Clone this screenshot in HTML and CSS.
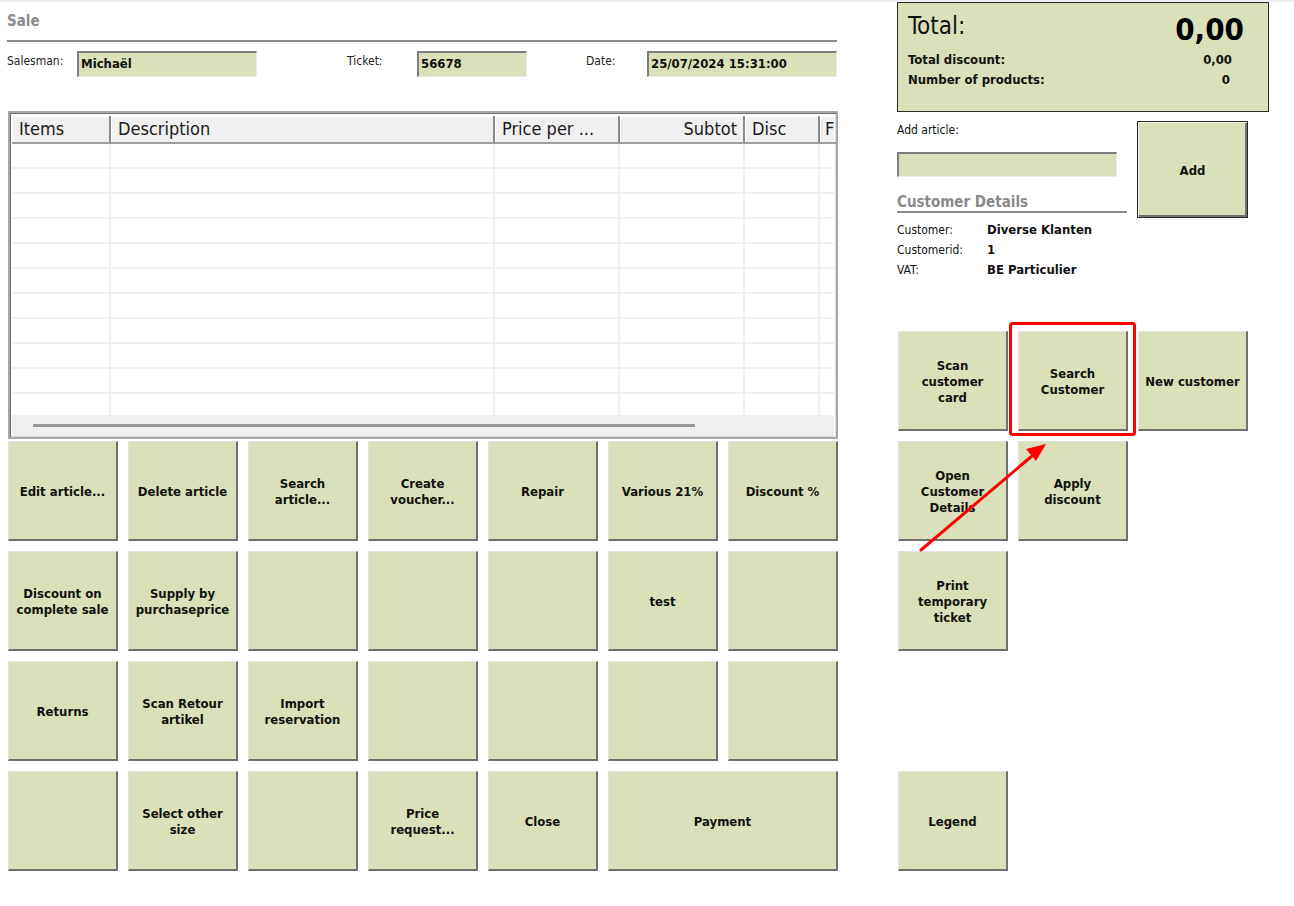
FILE: index.html
```html
<!DOCTYPE html>
<html>
<head>
<meta charset="utf-8">
<link rel="stylesheet" href="styles.css">
</head>
<body>
<div class="app">
  <div class="left">
    <div class="title">Sale</div>
    <div class="fields">
      <span class="lbl lbl-sales">Salesman:</span>
      <div class="input in-sales">Michaël</div>
      <span class="lbl lbl-ticket">Ticket:</span>
      <div class="input in-ticket">56678</div>
      <span class="lbl lbl-date">Date:</span>
      <div class="input in-date">25/07/2024 15:31:00</div>
    </div>
    <div class="table">
      <div class="thead">
        <div class="th c1">Items</div>
        <div class="th c2">Description</div>
        <div class="th c3">Price per ...</div>
        <div class="th c4 ar">Subtot</div>
        <div class="th c5">Disc</div>
        <div class="th c6">F</div>
      </div>
      <div class="tbody">
        <div class="tr"><div class="td c1"></div><div class="td c2"></div><div class="td c3"></div><div class="td c4"></div><div class="td c5"></div><div class="td c6"></div></div>
        <div class="tr"><div class="td c1"></div><div class="td c2"></div><div class="td c3"></div><div class="td c4"></div><div class="td c5"></div><div class="td c6"></div></div>
        <div class="tr"><div class="td c1"></div><div class="td c2"></div><div class="td c3"></div><div class="td c4"></div><div class="td c5"></div><div class="td c6"></div></div>
        <div class="tr"><div class="td c1"></div><div class="td c2"></div><div class="td c3"></div><div class="td c4"></div><div class="td c5"></div><div class="td c6"></div></div>
        <div class="tr"><div class="td c1"></div><div class="td c2"></div><div class="td c3"></div><div class="td c4"></div><div class="td c5"></div><div class="td c6"></div></div>
        <div class="tr"><div class="td c1"></div><div class="td c2"></div><div class="td c3"></div><div class="td c4"></div><div class="td c5"></div><div class="td c6"></div></div>
        <div class="tr"><div class="td c1"></div><div class="td c2"></div><div class="td c3"></div><div class="td c4"></div><div class="td c5"></div><div class="td c6"></div></div>
        <div class="tr"><div class="td c1"></div><div class="td c2"></div><div class="td c3"></div><div class="td c4"></div><div class="td c5"></div><div class="td c6"></div></div>
        <div class="tr"><div class="td c1"></div><div class="td c2"></div><div class="td c3"></div><div class="td c4"></div><div class="td c5"></div><div class="td c6"></div></div>
        <div class="tr"><div class="td c1"></div><div class="td c2"></div><div class="td c3"></div><div class="td c4"></div><div class="td c5"></div><div class="td c6"></div></div>
        <div class="tr"><div class="td c1"></div><div class="td c2"></div><div class="td c3"></div><div class="td c4"></div><div class="td c5"></div><div class="td c6"></div></div>
      </div>
      <div class="hscroll"><div class="thumb"></div></div>
    </div>
    <div class="btns">
      <div class="btn">Edit article...</div>
      <div class="btn">Delete article</div>
      <div class="btn">Search<br>article...</div>
      <div class="btn">Create<br>voucher...</div>
      <div class="btn">Repair</div>
      <div class="btn">Various 21%</div>
      <div class="btn">Discount %</div>

      <div class="btn">Discount on<br>complete sale</div>
      <div class="btn">Supply by<br>purchaseprice</div>
      <div class="btn"></div>
      <div class="btn"></div>
      <div class="btn"></div>
      <div class="btn">test</div>
      <div class="btn"></div>

      <div class="btn">Returns</div>
      <div class="btn">Scan Retour<br>artikel</div>
      <div class="btn">Import<br>reservation</div>
      <div class="btn"></div>
      <div class="btn"></div>
      <div class="btn"></div>
      <div class="btn"></div>

      <div class="btn"></div>
      <div class="btn">Select other<br>size</div>
      <div class="btn"></div>
      <div class="btn">Price<br>request...</div>
      <div class="btn">Close</div>
      <div class="btn span2">Payment</div>
    </div>
  </div>

  <div class="side">
    <div class="total">
      <div class="total-row">
        <span class="total-lbl">Total:</span>
        <span class="total-val">0,00</span>
      </div>
      <div class="sub-row"><span>Total discount:</span><span>0,00</span></div>
      <div class="sub-row"><span>Number of products:</span><span class="nprod">0</span></div>
    </div>
    <div class="add-area">
      <div class="add-left">
        <div class="small-lbl">Add article:</div>
        <div class="input in-add"></div>
        <div class="cd-title">Customer Details</div>
        <div class="cd-rows">
          <span class="cd-k">Customer:</span><span class="cd-v">Diverse Klanten</span>
          <span class="cd-k">Customerid:</span><span class="cd-v">1</span>
          <span class="cd-k">VAT:</span><span class="cd-v">BE Particulier</span>
        </div>
      </div>
      <div class="btn btn-add">Add</div>
    </div>
    <div class="rbtns">
      <div class="btn">Scan<br>customer<br>card</div>
      <div class="btn">Search<br>Customer</div>
      <div class="btn">New customer</div>
      <div class="btn">Open<br>Customer<br>Details</div>
      <div class="btn">Apply<br>discount</div>
      <div class="btn r3">Print<br>temporary<br>ticket</div>
      <div class="btn r5">Legend</div>
    </div>
  </div>
</div>

<svg class="annot" width="1294" height="906" viewBox="0 0 1294 906">
  <rect x="1010.5" y="323.5" width="124" height="111" rx="2" fill="none" stroke="#ff0000" stroke-width="3"/>
  <line x1="921" y1="550" x2="1032" y2="456" stroke="#ff0000" stroke-width="3" stroke-linecap="round"/>
  <polygon points="1046,444 1026,449 1036,461" fill="#ff0000"/>
</svg>
</body>
</html>
```

FILE: styles.css
```css
* { box-sizing: border-box; }
html, body { margin: 0; padding: 0; background: #ffffff; }
body {
  width: 1294px;
  height: 906px;
  overflow: hidden;
  border-top: 2px solid #eef1f7;
  font-family: "DejaVu Sans Condensed", "DejaVu Sans", sans-serif;
  color: #111;
  position: relative;
}
.app { display: flex; }

.left { width: 838px; padding-left: 7px; flex: none; }
.title {
  font-size: 15px; font-weight: bold; color: #8a8a8a;
  padding-top: 10px; height: 40px;
  border-bottom: 2px solid #8c8c8c;
  width: 830px;
}
.fields { display: flex; align-items: flex-start; margin-top: 9px; height: 26px; }
.lbl { font-size: 12px; color: #222; padding-top: 3px; }
.lbl-sales { width: 70px; }
.lbl-ticket { width: 70px; margin-left: 90px; }
.lbl-date { width: 61px; margin-left: 59px; }
.input {
  height: 26px;
  background: #dae0b9;
  border-top: 2px solid #7e7e7e;
  border-left: 2px solid #7e7e7e;
  border-right: 1px solid #ececec;
  border-bottom: 1px solid #ececec;
  font-size: 13px; font-weight: bold; color: #111;
  padding: 3px 0 0 2px;
}
.in-sales { width: 180px; }
.in-ticket { width: 110px; }
.in-date { width: 190px; }

.table {
  margin-top: 34px; margin-left: 1px;
  width: 830px; height: 328px;
  border: 2px solid #a8a8a8;
  box-shadow: inset 1px 1px 0 #6c6c6c, inset -1px -1px 0 #dcdcdc;
  padding: 3px 2px 1px 2px;
  display: flex; flex-direction: column;
  background: #fff;
  overflow: hidden;
}
.thead { display: flex; height: 28px; background: #f0f0f0; flex: none; }
.th {
  font-size: 18px; color: #1a1a1a; line-height: 26px;
  padding-left: 7px;
  border-right: 2px solid #8c8c8c;
  border-bottom: 2px solid #a0a0a0;
  box-shadow: inset 1px 1px 0 #ffffff;
  white-space: nowrap; overflow: hidden;
}
.th.ar { text-align: right; padding-right: 6px; padding-left: 0; }
.c1 { width: 99px; flex: none; }
.c2 { width: 384px; flex: none; }
.c3 { width: 125px; flex: none; }
.c4 { width: 125px; flex: none; }
.c5 { width: 75px; flex: none; }
.c6 { width: 16px; flex: none; }
.th.c6 { padding-left: 5px; border-right: none; }
.tbody { height: 271px; overflow: hidden; flex: none; }
.tr { display: flex; height: 25px; border-bottom: 2px solid #f1f1f1; }
.td { border-right: 2px solid #f1f1f1; height: 100%; }
.hscroll { flex: 1; background: #f0f0f0; display: flex; align-items: center; padding-left: 21px; }
.thumb { width: 662px; height: 3px; background: #9a9a9a; }

.btns {
  margin-top: 2px; margin-left: 1px;
  display: grid;
  grid-template-columns: repeat(7, 110px);
  grid-auto-rows: 100px;
  gap: 10px;
}
.btn {
  background: #dae0b9;
  border-top: 1px solid #e2e2e2;
  border-left: 1px solid #e2e2e2;
  border-right: 2px solid #6f6f6f;
  border-bottom: 2px solid #6f6f6f;
  display: flex; align-items: center; justify-content: center;
  text-align: center;
  padding-top: 2px;
  font-size: 13px; font-weight: bold; line-height: 16px; color: #111;
}
.span2 { grid-column: span 2; }

.side { margin-left: 59px; width: 372px; flex: none; }
.total {
  width: 372px; height: 110px;
  background: #dae0b9;
  border: 1px solid #2a2a2a;
  padding: 6px 24px 0 10px;
}
.total-row { display: flex; justify-content: space-between; align-items: flex-start; height: 41px; }
.total-lbl { font-size: 24px; line-height: 34px; color: #111; }
.total-val { font-size: 31px; font-weight: bold; color: #000; line-height: 42px; margin-top: -1px; }
.sub-row {
  display: flex; justify-content: space-between;
  font-size: 13px; font-weight: bold; line-height: 20px;
  padding-right: 12px;
}
.nprod { padding-right: 2px; }

.add-area { display: flex; margin-top: 10px; }
.add-left { width: 230px; }
.small-lbl { font-size: 12px; padding-top: 1px; height: 30px; }
.in-add { width: 220px; height: 25px; }
.cd-title {
  margin-top: 17px;
  font-size: 15px; font-weight: bold; color: #8a8a8a;
  border-bottom: 2px solid #8c8c8c;
  height: 19px; line-height: 17px;
}
.cd-rows {
  display: grid; grid-template-columns: 90px auto;
  font-size: 12px; line-height: 20px; margin-top: 7px;
}
.cd-v { font-weight: bold; font-size: 13px; }
.btn-add {
  margin-left: 10px; width: 111px; height: 97px;
  margin-top: -1px;
  border: 1px solid #2a2a2a;
  box-shadow: inset 1px 1px 0 #f0f0f0, inset -2px -2px 0 #707070;
}

.rbtns {
  margin-top: 51px; margin-left: 1px;
  display: grid;
  grid-template-columns: repeat(3, 110px);
  grid-template-rows: repeat(5, 100px);
  gap: 10px;
}
.r3 { grid-column: 1; grid-row: 3; }
.r5 { grid-column: 1; grid-row: 5; }

.annot { position: absolute; left: 0; top: -2px; pointer-events: none; }
```
